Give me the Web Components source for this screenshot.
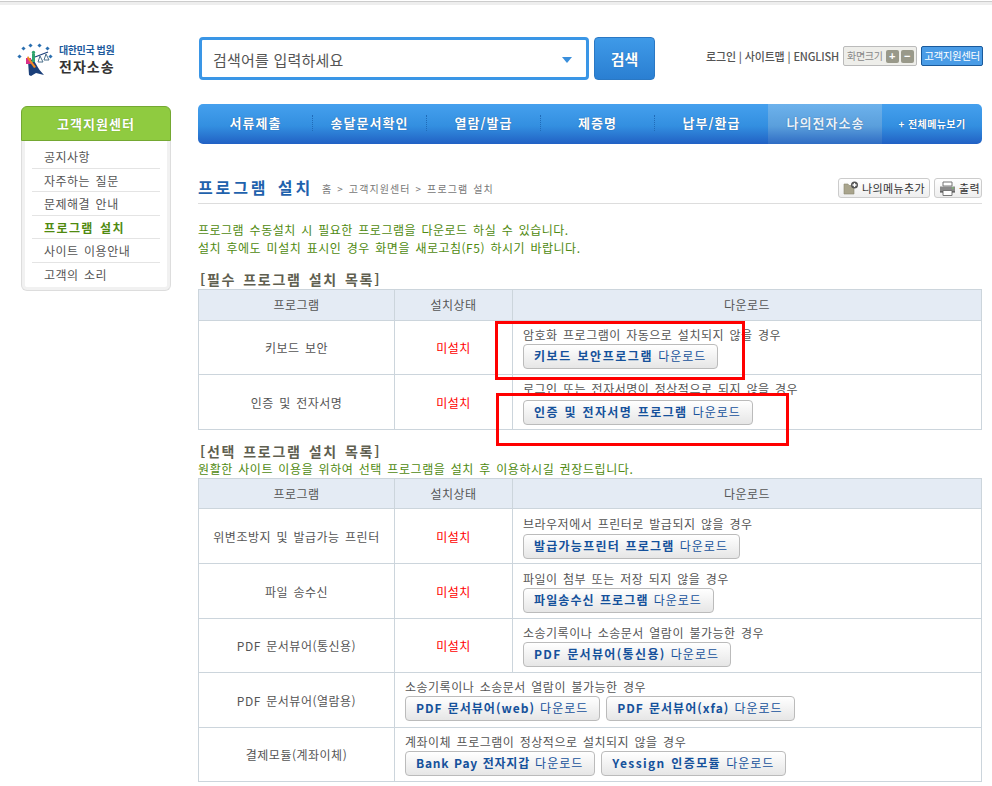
<!DOCTYPE html>
<html lang="ko">
<head>
<meta charset="utf-8">
<title>프로그램 설치</title>
<style>
  html, body { margin: 0; background: #fff; }
  body {
    position: relative;
    width: 992px;
    height: 786px;
    overflow: hidden;
    font: 12px/16px "Noto Sans CJK KR", "Liberation Sans", sans-serif;
    letter-spacing: .5px;
    word-spacing: 1.6px;
    color: #555;
  }
  .page { display: grid; grid-template-columns: 198px 784px; }
  .main { display: block; }
  .intro { margin: 17px 0 0; line-height: 18px; color: #4f8a10; }
  .sub { margin: 0 0 1px; line-height: 16px; color: #4f8a10; letter-spacing: .6px; word-spacing: 1.3px; }
</style>
</head>
<body>
<top-bar></top-bar>
<div class="page">
  <side-menu></side-menu>
  <div class="main">
    <main-nav></main-nav>
    <page-title></page-title>
    <p class="intro">프로그램 수동설치 시 필요한 프로그램을 다운로드 하실 수 있습니다.<br>설치 후에도 미설치 표시인 경우 화면을 새로고침(F5) 하시기 바랍니다.</p>
    <section-head style="margin-top:14px">[필수 프로그램 설치 목록]</section-head>
    <install-table style="--head:31px">
      <install-row name="키보드 보안" status="미설치" hint="암호화 프로그램이 자동으로 설치되지 않을 경우" h="54">
        <dl-btn style="--ls:1.55px">키보드 보안프로그램</dl-btn>
      </install-row>
      <install-row name="인증 및 전자서명" status="미설치" hint="로그인 또는 전자서명이 정상적으로 되지 않을 경우" h="55" gap="3">
        <dl-btn style="--ls:1.4px">인증 및 전자서명 프로그램</dl-btn>
      </install-row>
    </install-table>
    <section-head style="margin-top:13px">[선택 프로그램 설치 목록]</section-head>
    <p class="sub">원활한 사이트 이용을 위하여 선택 프로그램을 설치 후 이용하시길 권장드립니다.</p>
    <install-table>
      <install-row name="위변조방지 및 발급가능 프린터" status="미설치" hint="브라우저에서 프린터로 발급되지 않을 경우" h="55" pad="6" gap="2">
        <dl-btn style="--ls:1.25px">발급가능프린터 프로그램</dl-btn>
      </install-row>
      <install-row name="파일 송수신" status="미설치" hint="파일이 첨부 또는 저장 되지 않을 경우" h="55" pad="6">
        <dl-btn style="--ls:1.1px">파일송수신 프로그램</dl-btn>
      </install-row>
      <install-row name="PDF 문서뷰어(통신용)" status="미설치" hint="소송기록이나 소송문서 열람이 불가능한 경우" h="54">
        <dl-btn style="--ls:1.35px">PDF 문서뷰어(통신용)</dl-btn>
      </install-row>
      <install-row name="PDF 문서뷰어(열람용)" hint="소송기록이나 소송문서 열람이 불가능한 경우" h="55">
        <dl-btn style="--ls:1px">PDF 문서뷰어(web)</dl-btn>
        <dl-btn style="--ls:1px">PDF 문서뷰어(xfa)</dl-btn>
      </install-row>
      <install-row name="결제모듈(계좌이체)" hint="계좌이체 프로그램이 정상적으로 설치되지 않을 경우" h="54">
        <dl-btn style="--ls:.75px">Bank Pay 전자지갑</dl-btn>
        <dl-btn style="--ls:1.4px">Yessign 인증모듈</dl-btn>
      </install-row>
    </install-table>
  </div>
</div>
<red-mark style="left:495px;top:321px;width:250px;height:59px"></red-mark>
<red-mark style="left:496px;top:393px;width:293px;height:53px"></red-mark>

<script>
function define(tag, html) {
  customElements.define(tag, class extends HTMLElement {
    constructor() {
      super();
      this.attachShadow({ mode: "open" });
    }
    connectedCallback() {
      this.shadowRoot.innerHTML = typeof html === "function" ? html(this) : html;
    }
  });
}

define("top-bar", /*html*/ `
  <style>
    :host { display: block; height: 104px; box-sizing: border-box; border-top: 1px solid #fff; letter-spacing: 0; word-spacing: 0; }
    .line { height: 1px; background: #ccc; }
    .line2 { height: 3px; background: #eee; }
    .row { display: flex; align-items: flex-start; padding-top: 32px; }
    .logo { display: flex; flex: none; width: 199px; padding: 5px 0 0 17px; box-sizing: border-box; gap: 6px; }
    .logo svg { display: block; }
    .org { font-size: 10px; line-height: 12px; font-weight: 700; color: #1d5a9c; letter-spacing: -.4px; margin-top: 2px; }
    .svc { font-size: 14px; line-height: 18px; font-weight: 700; color: #333; letter-spacing: 1px; margin-top: 1px; }
    .search { width: 390px; height: 43px; box-sizing: border-box; border: 3px solid #3a96e6; border-radius: 4px; display: flex; align-items: center; padding: 3px 14px 0 11px; justify-content: space-between; font-size: 15px; color: #555; letter-spacing: .2px; }
    .search i { border: 5px solid transparent; border-top: 6px solid #3a8fdc; border-bottom: 0; }
    .go { width: 61px; height: 43px; margin-left: 5px; box-sizing: border-box; border: 1px solid #2a78c4; border-radius: 4px; background: linear-gradient(#3f9ae8, #2a7fd2); color: #fff; font-size: 15px; font-weight: 700; display: flex; align-items: center; justify-content: center; text-shadow: 0 0 1px #1c5ca0; }
    .util { display: flex; align-items: center; margin: 9px 0 0 51px; height: 20px; font-size: 11px; color: #555; white-space: nowrap; }
    .links { width: 137px; letter-spacing: -.15px; font-weight: 500; }
    .zoom { width: 74px; height: 20px; box-sizing: border-box; border: 1px solid #bbb; border-radius: 2px; background: #eeeeea; display: flex; align-items: center; padding-left: 3px; font-size: 10px; color: #888; letter-spacing: -.3px; }
    .zoom b { width: 13px; height: 13px; background: #99998a; color: #fff; border-radius: 2px; font: 700 11px/12px "Liberation Sans", sans-serif; text-align: center; margin-left: 2px; }
    .zoom b:first-of-type { margin-left: 3px; }
    .help { width: 62px; height: 20px; box-sizing: border-box; margin-left: 4px; border: 1px solid #1a5a9c; border-radius: 2px; background: #4a9ce6; color: #fff; font-size: 10.5px; line-height: 18px; text-align: center; letter-spacing: -.4px; }
  </style>
  <div class="line"></div><div class="line2"></div>
  <div class="row">
    <div class="logo">
      <svg width="36" height="36" viewBox="0 0 36 36">
        <g fill="#2a6fb0">
          <rect x="1" y="13" width="3" height="3" transform="rotate(45 2.5 14.5)"/>
          <rect x="5" y="5" width="3" height="3" transform="rotate(45 6.5 6.500)"/>
          <rect x="12" y="2" width="3" height="3" transform="rotate(45 13.5 3.5)"/>
          <rect x="21" y="2" width="3" height="3" transform="rotate(45 22.5 3.5)"/>
          <rect x="29" y="5" width="3" height="3" transform="rotate(45 30.5 6.500)"/>
          <rect x="32" y="13" width="3" height="3" transform="rotate(45 33.5 14.5)"/>
        </g>
        <path d="M11 19 16 17 19 22C21 26 24 30 27 33L19 31 14 34 12 33Z" fill="#1b3f7a"/>
        <path d="M15 12h3v8h-3z" fill="#2fa56f"/>
        <circle cx="16.500" cy="10.500" r="1.700" fill="#2fa56f"/>
        <path d="M9 16h5v6H9z" fill="#d9308a"/>
        <path d="M11 14 19 25 17 26 10 16Z" fill="#f08a24"/>
        <path d="M18 15 31 10" stroke="#1b3f7a" stroke-width="1.200"/>
        <path d="M23 14 21 20h5zM29 12l-2 6h5z" fill="none" stroke="#4a6f8a"/>
      </svg>
      <div><div class="org">대한민국 법원</div><div class="svc">전자소송</div></div>
    </div>
    <div class="search">검색어를 입력하세요<i></i></div>
    <div class="go">검색</div>
    <div class="util">
      <div class="links">로그인 | 사이트맵 | ENGLISH</div>
      <div class="zoom">화면크기<b>+</b><b>−</b></div>
      <div class="help">고객지원센터</div>
    </div>
  </div>
`);

define("side-menu", /*html*/ `
  <style>
    :host { display: block; width: 150px; margin: 2px 0 0 21px; color: #555; }
    .head { height: 35px; box-sizing: border-box; background: #8fcb40; border: 1px solid #74a832; border-radius: 6px 6px 0 0; color: #fff; font-size: 13px; font-weight: 700; line-height: 33px; text-align: center; letter-spacing: 1px; text-shadow: 0 0 1px #5f8f25; }
    ul { margin: 0; padding: 4px 10px; list-style: none; border: 1px solid #ddd; border-top: 0; border-radius: 0 0 6px 6px; box-shadow: inset 3px 0 0 #f1f1f1, inset -3px 0 0 #f1f1f1, inset 0 -3px 0 #f1f1f1; height: 150px; box-sizing: border-box; }
    li { height: 23.500px; box-sizing: border-box; padding-left: 12px; line-height: 23px; border-bottom: 1px solid #e4e4e4; }
    li:last-child { border: 0; }
    .on { color: #4f8a10; font-weight: 700; letter-spacing: 1.4px; }
  </style>
  <div class="head">고객지원센터</div>
  <ul>
    <li>공지사항</li><li>자주하는 질문</li><li>문제해결 안내</li>
    <li class="on">프로그램 설치</li><li>사이트 이용안내</li><li>고객의 소리</li>
  </ul>
`);

define("main-nav", /*html*/ `
  <style>
    :host { display: flex; height: 40px; border-radius: 5px; overflow: hidden; background: linear-gradient(#45a0ee 0%, #338fe0 55%, #2161c4 100%); color: #fff; font-size: 13px; font-weight: 700; letter-spacing: 1px; word-spacing: 0; text-shadow: 0 0 1px #17508f; }
    a { width: 114px; padding-left: 1px; box-sizing: border-box; text-align: center; line-height: 37px; position: relative; }
    a + a::before { content: ""; position: absolute; left: 0; top: 11px; height: 16px; border-left: 1px dotted #1f6bb8; }
    a.on { background: linear-gradient(#6db2ec 0%, #5a9fdc 55%, #2f6cc4 100%); color: #e8f2fb; }
    a.on::before { display: none; }
    .all { flex: 1; text-align: center; font-size: 10px; line-height: 39px; letter-spacing: .4px; }
  </style>
  <a>서류제출</a><a>송달문서확인</a><a>열람/발급</a><a>제증명</a><a>납부/환급</a><a class="on">나의전자소송</a>
  <div class="all">+ 전체메뉴보기</div>
`);

define("page-title", /*html*/ `
  <style>
    :host { display: flex; align-items: flex-end; height: 60px; box-sizing: border-box; border-bottom: 1px solid #ddd; padding-bottom: 5px; word-spacing: 0; }
    h2 { margin: 0; font-size: 16px; line-height: 22px; font-weight: 700; color: #1f62ad; letter-spacing: 2.900px; word-spacing: 2px; }
    .crumb { margin-left: 9px; font-size: 10px; line-height: 18px; color: #777; letter-spacing: 1.100px; word-spacing: 1px; }
    .tools { margin-left: auto; display: flex; gap: 4px; }
    .tool { height: 20px; box-sizing: border-box; border: 1px solid #ccc; border-radius: 3px; background: linear-gradient(#fff, #eee); display: flex; align-items: center; padding: 0 4px; gap: 3px; font-size: 11px; color: #333; letter-spacing: .4px; white-space: nowrap; }
    svg { display: block; flex: none; }
  </style>
  <h2>프로그램 설치</h2>
  <div class="crumb">홈 &gt; 고객지원센터 &gt; 프로그램 설치</div>
  <div class="tools">
    <div class="tool" style="width:92px">
      <svg width="16" height="14" viewBox="0 0 16 14">
        <path d="M1 3h4l1 1.500h5V13H1z" fill="#a9a48c" stroke="#8c8870" stroke-width=".6"/>
        <circle cx="11.500" cy="4" r="3.500" fill="#555"/>
        <path d="M11.500 2v4M9.500 4h4" stroke="#fff" stroke-width="1.300"/>
      </svg>나의메뉴추가
    </div>
    <div class="tool" style="width:48px">
      <svg width="17" height="15" viewBox="0 0 17 15">
        <path d="M4 1h9v4H4z" fill="#fff" stroke="#777"/>
        <path d="M1 5.500h15V11H1z" fill="#8a8a8a"/>
        <path d="M4 9.500h9v5H4z" fill="#fff" stroke="#777"/>
        <path d="M1 11h3M13 11h3" stroke="#444"/>
        <rect x="13" y="6.500" width="1.500" height="1" fill="#6fdc5a"/>
      </svg>출력
    </div>
  </div>
`);

define("section-head", /*html*/ `
  <style>
    :host { display: block; height: 18px; padding-left: 2px; font-size: 14px; line-height: 16px; font-weight: 700; color: #5f5f50; letter-spacing: 1.700px; word-spacing: 1.500px; }
  </style>
  <slot></slot>
`);

define("install-table", /*html*/ `
  <style>
    :host { display: block; border: 1px solid #ccd5dc; border-bottom: 0; color: #555; }
    .cols { display: grid; grid-template-columns: 195px 118px 1fr; height: var(--head, 30px); background: #e4ebf4; border-bottom: 1px solid #ccd5dc; box-sizing: border-box; text-align: center; line-height: 29px; }
    .cols div + div { border-left: 1px solid #ccd5dc; }
  </style>
  <div class="cols"><div>프로그램</div><div>설치상태</div><div>다운로드</div></div>
  <slot></slot>
`);

define("install-row", (el) => {
  const status = el.getAttribute("status");
  const pad = el.getAttribute("pad") || 5;
  const gap = el.getAttribute("gap") || 1;
  return /*html*/ `
  <style>
    :host { display: grid; grid-template-columns: 195px ${status ? "118px" : ""} 1fr; height: ${el.getAttribute("h")}px; box-sizing: border-box; border-bottom: 1px solid #ccd5dc; }
    .c { display: flex; align-items: center; justify-content: center; padding-top: 1px; }
    .c + div { border-left: 1px solid #ccd5dc; }
    .st { color: #f00; }
    .dl { padding: ${pad}px 0 0 10px; line-height: 17px; }
    .btns { display: flex; gap: 6px; margin-top: ${gap}px; }
  </style>
  <div class="c">${el.getAttribute("name")}</div>
  ${status ? `<div class="c st">${status}</div>` : ""}
  <div class="dl">
    <div>${el.getAttribute("hint")}</div>
    <div class="btns"><slot></slot></div>
  </div>`;
});

define("dl-btn", /*html*/ `
  <style>
    :host { display: block; height: 25px; box-sizing: border-box; border: 1px solid #bbb; border-radius: 4px; background: linear-gradient(#fff, #e6e6e6); padding: 0 11px 0 10px; line-height: 22px; color: #15519b; white-space: nowrap; letter-spacing: 1px; word-spacing: .8px; }
    b { font-weight: 700; letter-spacing: var(--ls, 1.300px); }
  </style>
  <b><slot></slot></b> 다운로드
`);

define("red-mark", /*html*/ `
  <style>
    :host { display: block; position: absolute; box-sizing: border-box; border: 3px solid #f00; }
  </style>
`);
</script>
</body>
</html>
